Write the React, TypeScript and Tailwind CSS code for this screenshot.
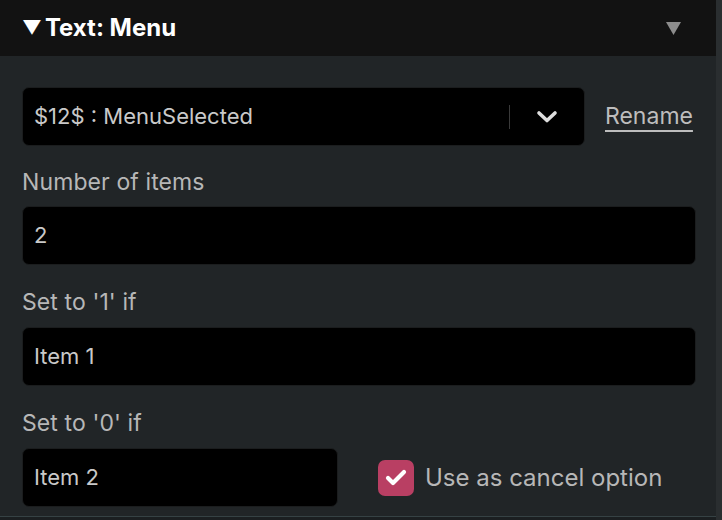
import { Check } from 'lucide-react';

const font = { fontFamily: 'Inter, "Noto Sans", sans-serif' };

function Field({ value, className }: { value: string; className?: string }) {
  return (
    <div
      className={`flex h-[59px] items-center rounded-[7px] border border-[#1b1d1e] bg-black px-[11px] text-[22px] text-[#c9c9c9] ${className ?? ''}`}
    >
      {value}
    </div>
  );
}

function Label({ children }: { children: string }) {
  return <div className="text-[23px] leading-[26px] tracking-[0.1px] text-[#b7b7b7]">{children}</div>;
}

export default function App() {
  return (
    <div style={font} className="flex h-[520px] w-[722px] overflow-hidden bg-[#212527]">
      <div className="flex min-w-0 flex-1 flex-col">
        {/* section header */}
        <div className="flex h-[56px] shrink-0 items-center justify-between bg-[#121212] pl-[22px] pr-[35px]">
          <div className="flex items-center gap-[3px] text-[24px] font-bold text-white">
            <span className="text-[19px]">▼</span>
            <span>Text: Menu</span>
          </div>
          <svg width="15" height="13" viewBox="0 0 15 13">
            <path d="M0 0 H15 L7.5 13 Z" fill="#8c8c8c" />
          </svg>
        </div>

        <div className="flex flex-1 flex-col px-[22px] pt-[31px]">
          {/* variable picker */}
          <div className="flex items-center gap-[20px]">
            <div className="flex h-[59px] w-[563px] items-center rounded-[7px] border border-[#1b1d1e] bg-black pl-[11px] text-[22px] text-[#c9c9c9]">
              <span className="flex-1">$12$ : MenuSelected</span>
              <div className="h-[24px] w-px bg-[#3a3a3a]" />
              <svg className="mx-[26px]" width="22" height="14" viewBox="0 0 22 14">
                <path d="M3 3 L11 10.5 L19 3" fill="none" stroke="#dedede" strokeWidth="3.6" strokeLinecap="round" strokeLinejoin="round" />
              </svg>
            </div>
            <span className="text-[23px] text-[#bdbdbd] underline decoration-[2px] underline-offset-[6px]">Rename</span>
          </div>

          <div className="mt-[23px]">
            <Label>Number of items</Label>
            <Field value="2" className="mt-[11px] w-[674px]" />
          </div>

          <div className="mt-[24px]">
            <Label>Set to '1' if</Label>
            <Field value="Item 1" className="mt-[12px] w-[674px]" />
          </div>

          <div className="mt-[24px]">
            <Label>Set to '0' if</Label>
            <div className="mt-[12px] flex items-center">
              <Field value="Item 2" className="w-[316px]" />
              <div className="ml-[40px] flex items-center gap-[11px]">
                <div className="flex h-[36px] w-[36px] items-center justify-center rounded-[7px] bg-[#b93f63]">
                  <Check size={24} strokeWidth={4.2} color="#ffffff" />
                </div>
                <span className="text-[24px] text-[#b7b7b7]">Use as cancel option</span>
              </div>
            </div>
          </div>
        </div>

        {/* bottom edge */}
        <div className="h-px shrink-0 bg-[#364244]" />
        <div className="h-[3px] shrink-0 bg-[#1b1f21]" />
      </div>
      {/* right gutter */}
      <div className="w-[6px] shrink-0 bg-[#2a2e30]" />
    </div>
  );
}
